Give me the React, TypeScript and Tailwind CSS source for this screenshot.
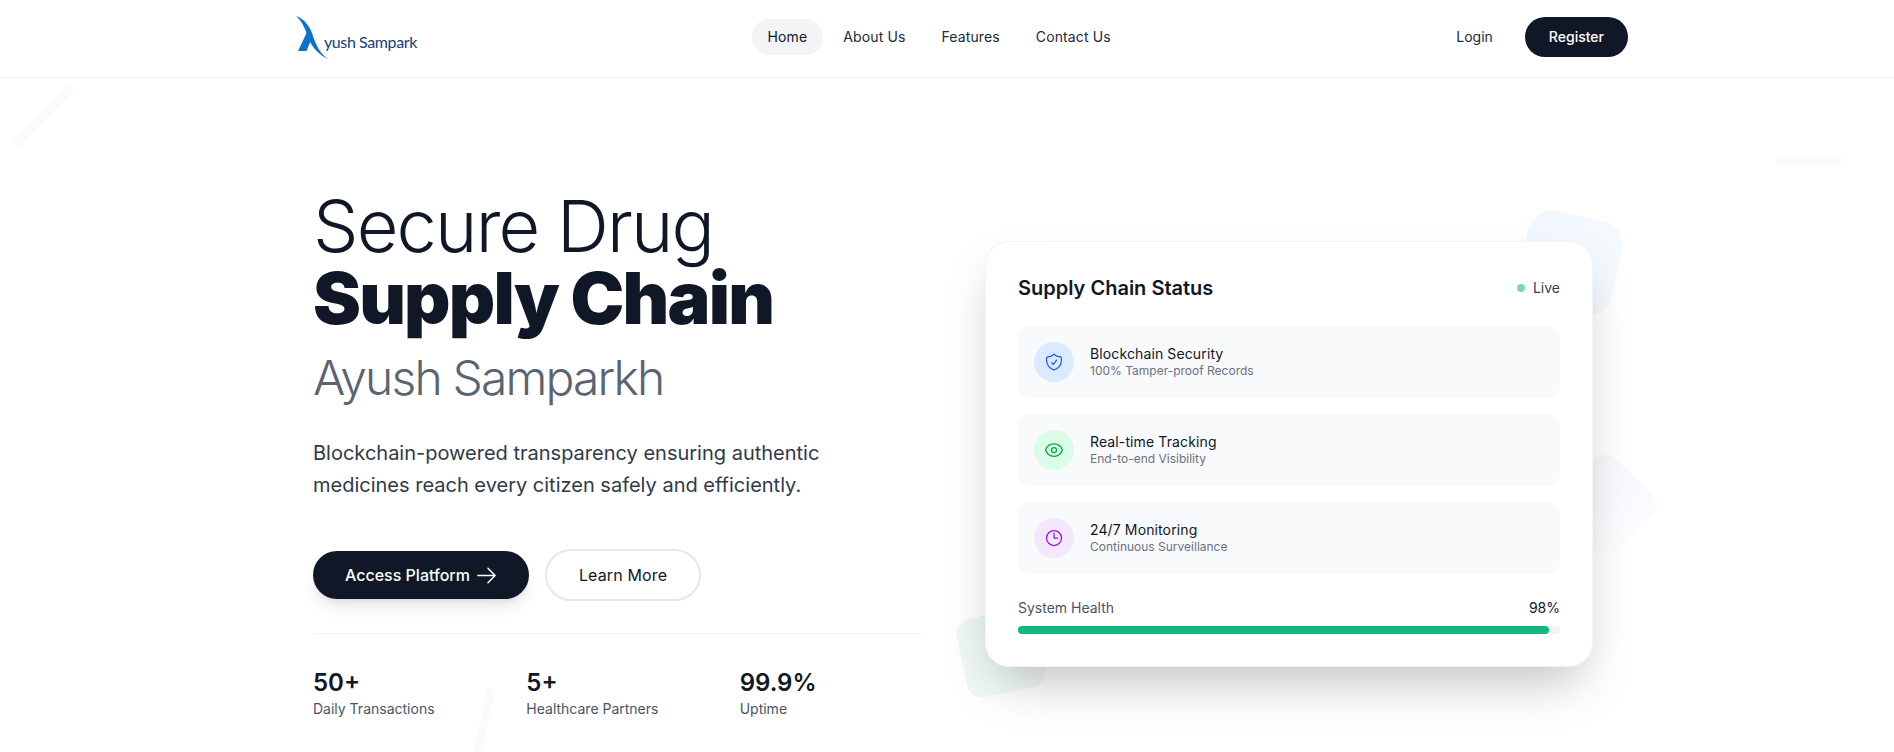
import {
  HiOutlineArrowRight,
  HiOutlineClock,
  HiOutlineEye,
  HiOutlineShieldCheck,
} from "react-icons/hi2"

const navLinks = ["Home", "About Us", "Features", "Contact Us"]

const statusRows = [
  {
    title: "Blockchain Security",
    subtitle: "100% Tamper-proof Records",
    icon: HiOutlineShieldCheck,
    circle: "bg-blue-100",
    color: "text-blue-600",
  },
  {
    title: "Real-time Tracking",
    subtitle: "End-to-end Visibility",
    icon: HiOutlineEye,
    circle: "bg-green-100",
    color: "text-green-600",
  },
  {
    title: "24/7 Monitoring",
    subtitle: "Continuous Surveillance",
    icon: HiOutlineClock,
    circle: "bg-purple-100",
    color: "text-purple-600",
  },
]

const stats = [
  { value: "50+", label: "Daily Transactions" },
  { value: "5+", label: "Healthcare Partners" },
  { value: "99.9%", label: "Uptime" },
]

function Logo() {
  return (
    <div className="relative flex h-full w-[172px] items-center pl-[29px]">
      <svg width="40" height="46" viewBox="0 0 40 46" className="absolute left-[29px] top-[15px]">
        <path d="M1 1C9 4 14 10 17 18C20 28 25 39 33 44C24 40 18 33 14 25C11 16 8 7 1 1Z" fill="#0d73c8" />
        <path d="M13 15L3 36L11.5 36L16 25C15 21 14 18 13 15Z" fill="#0d73c8" />
      </svg>
      <span className="ml-[29px] mt-[9px] whitespace-nowrap font-['Lato',sans-serif] text-base leading-none tracking-[-0.4px] text-[#153e7a]">
        yush Sampark
      </span>
    </div>
  )
}

export default function App() {
  return (
    <div className="relative h-[752px] overflow-hidden bg-white font-['Inter',sans-serif] text-gray-900">
      {/* faint background decoration */}
      <div className="absolute left-[3px] top-[112px] h-2 w-20 -rotate-45 bg-[#fafafa]" />
      <div className="absolute left-[1777px] top-[157px] h-2 w-16 bg-[#fafafa]" />
      <div className="absolute left-[433px] top-[732px] h-2 w-24 -rotate-[78deg] bg-[#fafafa]" />
      <div className="absolute left-[1522px] top-[215px] h-24 w-24 rotate-12 rounded-3xl bg-linear-to-br from-[#f1f8fd] to-[#f6fafe]" />
      <div className="absolute left-[1566px] top-[465px] h-20 w-20 rotate-45 rounded-2xl bg-linear-to-br from-[#faf7fd] to-[#fefdff]" />
      <div className="absolute left-[961px] top-[613px] h-20 w-20 -rotate-12 rounded-2xl bg-linear-to-br from-[#edf8f3] to-[#f3fbf7]" />

      <header className="relative border-b border-gray-100 bg-white">
        <nav className="mx-auto mb-[3px] flex h-[74px] w-[1362px] items-center justify-between">
          <Logo />
          <div className="flex items-center gap-1">
            {navLinks.map((link) => (
              <a
                key={link}
                className={
                  link === "Home"
                    ? "rounded-full bg-gray-100 px-4 py-2 text-sm tracking-[0.12px] text-gray-900"
                    : "rounded-full px-4 py-2 text-sm tracking-[0.12px] text-gray-800"
                }
              >
                {link}
              </a>
            ))}
          </div>
          <div className="flex items-center gap-4">
            <a className="px-4 py-2 text-sm text-gray-800">Login</a>
            <button className="rounded-full bg-gray-900 px-6 py-2.5 text-sm font-medium text-white">Register</button>
          </div>
        </nav>
      </header>

      <main className="relative ml-[313px] grid w-[1280px] grid-cols-2 items-start gap-16 pt-[112px]">
        <div>
          <h1 className="text-7xl leading-none">
            <span className="block font-light tracking-tight">Secure Drug</span>
            <span className="block font-black tracking-tight">Supply Chain</span>
          </h1>
          <h2 className="mb-[35px] mt-5 text-5xl font-light leading-none tracking-[-1.85px] text-[#5b6472]">
            Ayush Samparkh
          </h2>
          <p className="mb-12 max-w-[512px] text-xl leading-8 text-[#303a4a]">
            Blockchain-powered transparency ensuring authentic medicines reach every citizen safely and efficiently.
          </p>
          <div className="mb-8 flex items-center gap-4">
            <button className="flex items-center gap-[5px] rounded-full bg-gray-900 py-3 pl-8 pr-[31px] text-base font-medium text-white shadow-lg">
              Access Platform
              <HiOutlineArrowRight className="h-[23px] w-[23px]" />
            </button>
            <button className="rounded-full border-2 border-gray-200 px-8 py-3 text-base tracking-[0.14px] text-gray-900">
              Learn More
            </button>
          </div>
          <div className="grid grid-cols-3 gap-8 border-t border-gray-100 pt-[33px]">
            {stats.map((stat) => (
              <div key={stat.label}>
                <div className="text-2xl font-semibold text-gray-900">{stat.value}</div>
                <div className="text-sm text-gray-600">{stat.label}</div>
              </div>
            ))}
          </div>
        </div>

        <div className="mt-[51px] rounded-3xl border border-gray-100 bg-white p-8 shadow-2xl">
          <div className="mb-6 flex items-center justify-between">
            <h3 className="text-xl font-semibold text-gray-900">Supply Chain Status</h3>
            <div className="flex items-center gap-2">
              <span className="h-2 w-2 rounded-full bg-[#76dcb5]" />
              <span className="text-sm text-gray-700">Live</span>
            </div>
          </div>
          <div className="flex flex-col gap-4">
            {statusRows.map((row) => {
              const Icon = row.icon
              return (
                <div key={row.title} className="flex items-center gap-4 rounded-xl bg-gray-50 p-4">
                  <div className={`flex h-10 w-10 items-center justify-center rounded-full ${row.circle}`}>
                    <Icon className={`h-5 w-5 ${row.color}`} />
                  </div>
                  <div>
                    <div className="text-sm leading-[18px] tracking-[0.12px] text-gray-900">{row.title}</div>
                    <div className="text-xs leading-4 text-gray-500">{row.subtitle}</div>
                  </div>
                </div>
              )
            })}
          </div>
          <div className="mt-6">
            <div className="mb-2 flex items-center justify-between text-sm">
              <span className="text-gray-600">System Health</span>
              <span className="font-normal text-gray-900">98%</span>
            </div>
            <div className="h-2 rounded-full bg-gray-100">
              <div className="h-2 w-[98%] rounded-full bg-[#10b981]" />
            </div>
          </div>
        </div>
      </main>
    </div>
  )
}
